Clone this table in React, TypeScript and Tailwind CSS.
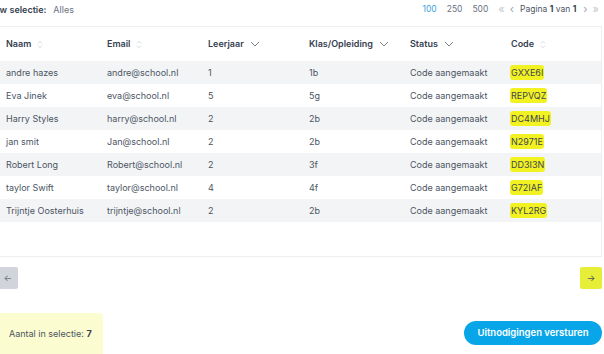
import React from "react";

const rows = [
  ["andre hazes", "andre@school.nl", "1", "1b", "GXXE6I"],
  ["Eva Jinek", "eva@school.nl", "5", "5g", "REPVQZ"],
  ["Harry Styles", "harry@school.nl", "2", "2b", "DC4MHJ"],
  ["jan smit", "Jan@school.nl", "2", "2b", "N2971E"],
  ["Robert Long", "Robert@school.nl", "2", "3f", "DD3I3N"],
  ["taylor Swift", "taylor@school.nl", "4", "4f", "G72IAF"],
  ["Trijntje Oosterhuis", "trijntje@school.nl", "2", "2b", "KYL2RG"],
];

function SortIcon() {
  return (
    <svg width="6" height="9" viewBox="0 0 6 9" className="ml-[6px]" fill="none" stroke="#d1d5db" strokeWidth="0.9">
      <path d="M1 3.3 L3 1.3 L5 3.3" />
      <path d="M1 5.7 L3 7.7 L5 5.7" />
    </svg>
  );
}

function DownIcon() {
  return (
    <svg width="10" height="6" viewBox="0 0 10 6" className="ml-[6px]" fill="none" stroke="#6b7280" strokeWidth="0.9">
      <path d="M1 1 L5 5 L9 1" />
    </svg>
  );
}

const headers: [string, "sort" | "down"][] = [
  ["Naam", "sort"],
  ["Email", "sort"],
  ["Leerjaar", "down"],
  ["Klas/Opleiding", "down"],
  ["Status", "down"],
  ["Code", "sort"],
];

export default function App() {
  return (
    <div className="w-[604px] h-[354px] overflow-hidden bg-white" style={{ fontFamily: "Inter, 'Noto Sans', sans-serif" }}>
      <div className="-ml-[10px] w-[612px]">
        {/* top bar */}
        <div className="h-[26px] flex items-start pt-[4px] justify-between pr-[3px]">
          <div className="flex items-center pl-[3px] text-[9px] leading-[11px]">
            <span className="font-semibold text-[#374151]">Uw selectie:</span>
            <span className="ml-[7px] text-[#6b7280]">Alles</span>
          </div>
          <div className="flex items-center text-[8.5px] leading-[11px] text-[#6b7280]">
            <span className="text-[#3ba3e0]">100</span>
            <span className="ml-[10px]">250</span>
            <span className="ml-[10px]">500</span>
            <span className="ml-[10px] text-[11px] text-[#c4c7cc]">«</span>
            <span className="ml-[5px] text-[11px] text-[#9ca3af]">‹</span>
            <span className="ml-[6px] text-[#4b5563]">
              Pagina <b className="text-[#374151]">1</b> van <b className="text-[#374151]">1</b>
            </span>
            <span className="ml-[7px] text-[11px] text-[#9ca3af]">›</span>
            <span className="ml-[5px] text-[11px] text-[#c4c7cc]">»</span>
          </div>
        </div>

        {/* table card */}
        <div className="h-[231px] border border-[#eceef1] bg-white">
          <div className="grid grid-cols-[101px_101px_101px_101px_101px_101px] h-[34px] items-center">
            {headers.map(([h, t]) => (
              <div key={h} className="pl-[15px] flex items-center text-[9px] font-semibold text-[#374151]">
                {h}
                {t === "sort" ? <SortIcon /> : <DownIcon />}
              </div>
            ))}
          </div>
          {rows.map((r, i) => (
            <div
              key={r[0]}
              className={`grid grid-cols-[101px_101px_101px_101px_101px_101px] h-[23px] items-center text-[9px] text-[#4b5563] ${
                i % 2 === 0 ? "bg-[#f3f4f6]" : "bg-white"
              }`}
            >
              <div className="pl-[15px]">{r[0]}</div>
              <div className="pl-[15px]">{r[1]}</div>
              <div className="pl-[15px]">{r[2]}</div>
              <div className="pl-[15px]">{r[3]}</div>
              <div className="pl-[15px]">Code aangemaakt</div>
              <div className="pl-[14px]">
                <span className="bg-[#f2f223] px-[1px] py-[2px] rounded-[3px] text-[#3f4650]">{r[4]}</span>
              </div>
            </div>
          ))}
        </div>

        {/* arrows */}
        <div className="mt-[10px] flex justify-between">
          <div className="w-[28px] h-[22px] rounded-[2px] bg-[#d1d5db] flex items-center justify-end pr-[6px] text-[9px] text-[#6b7280]">←</div>
          <div className="w-[22px] h-[22px] rounded-[2px] bg-[#e6ee38] flex items-center justify-center text-[9px] text-[#4b5563]">→</div>
        </div>

        {/* bottom */}
        <div className="mt-[24px] flex justify-between items-start">
          <div className="w-[113px] h-[48px] rounded-[4px] bg-[#fbfccf] pl-[19px] pt-[14px] text-[9px] text-[#4b5563]">
            Aantal in selectie: <b className="text-[#374151]">7</b>
          </div>
          <div className="mt-[8px] w-[138px] h-[24px] rounded-full bg-[#08a6e8] flex items-center justify-center text-[9.5px] font-semibold text-white">
            Uitnodigingen versturen
          </div>
        </div>
      </div>
    </div>
  );
}
